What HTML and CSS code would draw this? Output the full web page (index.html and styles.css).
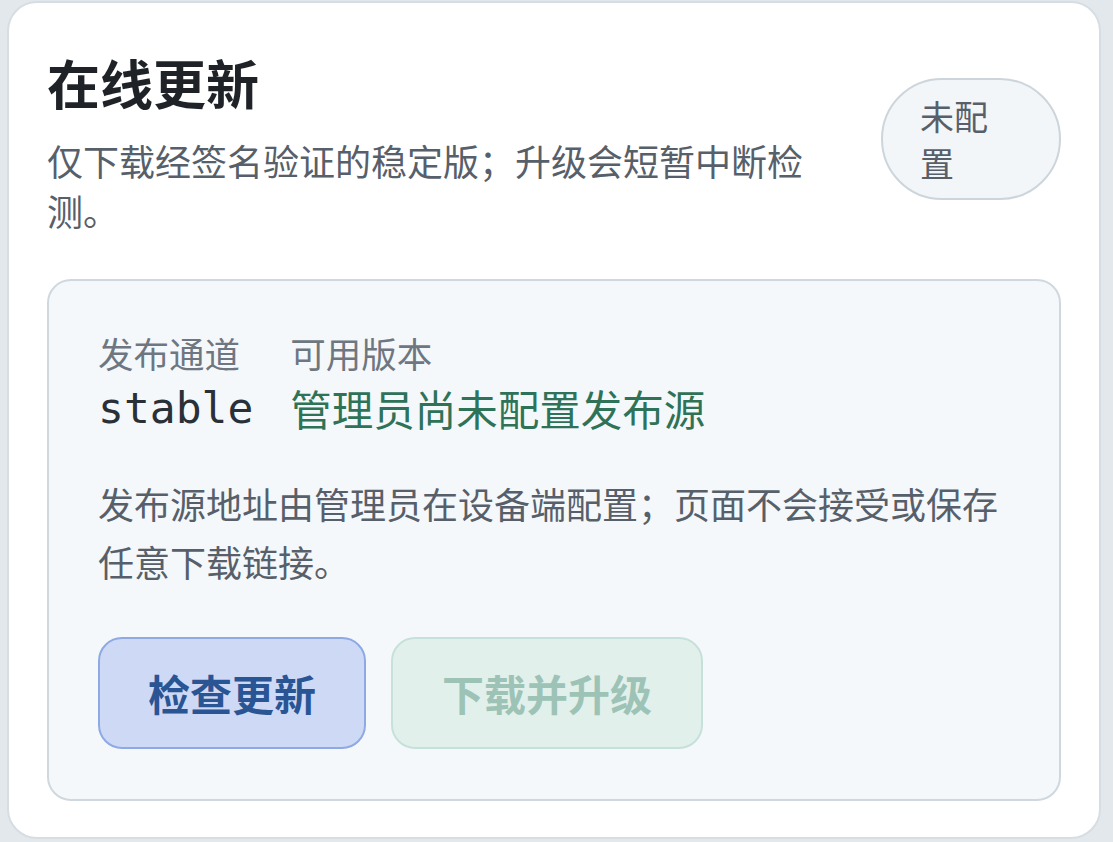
FILE: index.html
```html
<!DOCTYPE html>
<html lang="zh-CN">
<head>
<meta charset="utf-8">
<title>在线更新</title>
<link rel="stylesheet" href="styles.css">
</head>
<body>
  <section class="card">
    <header class="card-head">
      <div class="head-text">
        <h1 class="title">在线更新</h1>
        <p class="subtitle">仅下载经签名验证的稳定版；升级会短暂中断检测。</p>
      </div>
      <span class="badge">未配置</span>
    </header>
    <div class="panel">
      <div class="facts">
        <div class="fact">
          <span class="label">发布通道</span>
          <span class="value mono">stable</span>
        </div>
        <div class="fact">
          <span class="label">可用版本</span>
          <span class="value ok">管理员尚未配置发布源</span>
        </div>
      </div>
      <p class="note">发布源地址由管理员在设备端配置；页面不会接受或保存任意下载链接。</p>
      <div class="actions">
        <button class="btn btn-primary" type="button">检查更新</button>
        <button class="btn btn-secondary" type="button" disabled>下载并升级</button>
      </div>
    </div>
  </section>
</body>
</html>
```

FILE: styles.css
```css
* { box-sizing: border-box; }

html, body {
  margin: 0;
  height: 100%;
}

body {
  background: #e3e8ed;
  padding: 1px 12px 0 7px;
  font-family: "Noto Sans CJK SC", "Noto Sans", sans-serif;
  color: #1f2328;
}

.card {
  width: 1094px;
  height: 838px;
  background: #ffffff;
  border: 2px solid #d6dde3;
  border-radius: 30px;
  padding: 40px 38px 36px 38px;
}

.card-head {
  display: flex;
  align-items: center;
  justify-content: space-between;
  gap: 24px;
}

.head-text {
  width: 770px;
}

.title {
  margin: 0;
  font-size: 53px;
  line-height: 78px;
  font-weight: 700;
  color: #1f2328;
}

.subtitle {
  margin: 14px 0 0 0;
  font-size: 36px;
  line-height: 50px;
  color: #57606a;
}

.badge {
  flex: none;
  width: 180px;
  padding: 12px 40px 12px 37px;
  border: 2px solid #cdd5dc;
  border-radius: 62px;
  background: #f3f6f8;
  color: #57606a;
  font-size: 34px;
  line-height: 47px;
}

.panel {
  margin-top: 44px;
  background: #f5f8fa;
  border: 2px solid #d0d8df;
  border-radius: 24px;
  padding: 48px 48px 50px 49px;
}

.facts {
  display: flex;
  gap: 37px;
}

.fact {
  display: flex;
  flex-direction: column;
}

.label {
  font-size: 35.5px;
  line-height: 48px;
  color: #6e7781;
}

.value {
  margin-top: 2px;
  font-size: 41.5px;
  line-height: 58px;
}

.mono {
  font-family: "DejaVu Sans Mono", "Liberation Mono", monospace;
  font-size: 43px;
  color: #2a3038;
}

.ok {
  color: #2e7358;
}

.note {
  margin: 37px 0 0 0;
  font-size: 36px;
  line-height: 58px;
  color: #57606a;
}

.actions {
  display: flex;
  gap: 25px;
  margin-top: 47px;
}

.btn {
  font-family: "Noto Sans CJK SC", "Noto Sans", sans-serif;
  font-size: 42px;
  line-height: 56px;
  font-weight: 700;
  padding: 26px 48px;
  border-radius: 24px;
  border: 2px solid;
  cursor: pointer;
}

.btn-primary {
  background: #cedaf5;
  border-color: #8ea9e3;
  color: #2a5594;
}

.btn-secondary {
  padding: 26px 49px;
  background: #e2f0ec;
  border-color: #c6e1d9;
  color: #9dc3b6;
  cursor: default;
}
```
